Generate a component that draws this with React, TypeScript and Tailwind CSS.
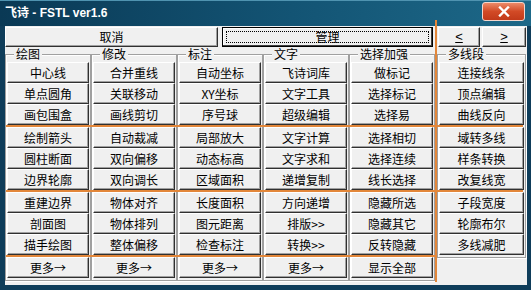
import React from "react";

type Col = { title: string; sections: string[][]; w: string };

const cols: Col[] = [
  { title: "绘图", w: "w-[86px]", sections: [["中心线", "单点圆角", "画包围盒"], ["绘制箭头", "圆柱断面", "边界轮廓"], ["重建边界", "剖面图", "描手绘图"], ["更多→"]] },
  { title: "修改", w: "w-[86px]", sections: [["合并重线", "关联移动", "画线剪切"], ["自动裁减", "双向偏移", "双向调长"], ["物体对齐", "物体排列", "整体偏移"], ["更多→"]] },
  { title: "标注", w: "w-[86px]", sections: [["自动坐标", "XY坐标", "序号球"], ["局部放大", "动态标高", "区域面积"], ["长度面积", "图元距离", "检查标注"], ["更多→"]] },
  { title: "文字", w: "w-[86px]", sections: [["飞诗词库", "文字工具", "超级编辑"], ["文字计算", "文字求和", "递增复制"], ["方向递增", "排版>>", "转换>>"], ["更多→"]] },
  { title: "选择加强", w: "w-[86px]", sections: [["做标记", "选择标记", "选择易"], ["选择相切", "选择连续", "线长选择"], ["隐藏所选", "隐藏其它", "反转隐藏"], ["显示全部"]] },
];

const last: Col = { title: "多线段", w: "w-[89px]", sections: [["连接线条", "顶点编辑", "曲线反向"], ["域转多线", "样条转换", "改复线宽"], ["子段宽度", "轮廓布尔", "多线减肥"]] };

function Btn({ label }: { label: string }) {
  return (
    <div className="h-[21px] flex items-center justify-center bg-[#f0f0f0] border border-t-white border-l-white border-b-[#303030] border-r-[#303030] shadow-[inset_-1px_-1px_0_#a0a0a0] text-[12px] leading-none text-black whitespace-nowrap">
      {label}
    </div>
  );
}

function Group({ col, ml }: { col: Col; ml?: string }) {
  return (
    <fieldset className={`${col.w} ${ml ?? ""} shrink-0 min-w-0 border border-[#a0a0a0] shadow-[inset_1px_1px_0_#ffffff,1px_1px_0_#ffffff] px-[1px] pt-[2px] pb-[2px]`}>
      <legend className="ml-[7px] px-[2px] text-[12px] leading-[12px] text-black bg-[#f0f0f0]">{col.title}</legend>
      <div className="flex flex-col gap-[2px]">
        {col.sections.map((sec, i) => (
          <div key={i} className="flex flex-col">
            {sec.map((b) => (
              <Btn key={b} label={b} />
            ))}
          </div>
        ))}
      </div>
    </fieldset>
  );
}

export default function App() {
  return (
    <div className="relative w-[531px] h-[290px] overflow-hidden font-['Noto_Sans_CJK_SC',sans-serif] text-black select-none">
      {/* title bar */}
      <div className="h-[26px] flex items-center justify-between bg-[linear-gradient(to_right,#0a3955,#135474_55%,#1d6888)] shadow-[inset_0_1px_0_#4f93b0]">
        <div className="pl-[5px] text-white font-bold text-[12px] font-['Liberation_Sans','Noto_Sans_CJK_SC',sans-serif] whitespace-pre">
          飞诗 - FSTL ver1.6
        </div>
        <div className="mr-[6px] mb-[3px] w-[43px] h-[19px] rounded-[3px] border border-[#f4d6cc] bg-[linear-gradient(to_bottom,#ec8a68,#d24a26_50%,#c23a1a)] flex items-center justify-center">
          <svg width="12" height="11" viewBox="0 0 12 11">
            <path d="M2 1.5 L10 9.5 M10 1.5 L2 9.5" stroke="white" strokeWidth="2.4" strokeLinecap="square" />
          </svg>
        </div>
      </div>

      {/* body */}
      <div className="h-[264px] bg-[#f0f0f0] border-l-[5px] border-r-[4px] border-b-[5px] border-[#0f3d5a] pt-[1px]">
        {/* top row */}
        <div className="flex h-[20px] text-[12px]">
          <div className="w-[213px] flex items-center justify-center bg-[#f0f0f0] border border-t-white border-l-white border-b-[#303030] border-r-[#303030] shadow-[inset_-1px_-1px_0_#a0a0a0]">
            取消
          </div>
          <div className="ml-[4px] w-[211px] p-[3px] bg-[#f0f0f0] border border-black shadow-[inset_-1px_-1px_0_#404040,inset_1px_1px_0_#ffffff]">
            <div className="h-full flex items-center justify-center border border-dotted border-black">管理</div>
          </div>
          <div className="ml-[5px] w-[42px] flex items-center justify-center bg-[#f0f0f0] border border-t-white border-l-white border-b-[#303030] border-r-[#303030] shadow-[inset_-1px_-1px_0_#a0a0a0] font-['Liberation_Sans',sans-serif] text-[13px] underline">
            &lt;
          </div>
          <div className="ml-[2px] w-[44px] flex items-center justify-center bg-[#f0f0f0] border border-t-white border-l-white border-b-[#303030] border-r-[#303030] shadow-[inset_-1px_-1px_0_#a0a0a0] font-['Liberation_Sans',sans-serif] text-[13px] underline">
            &gt;
          </div>
        </div>

        {/* groups */}
        <div className="mt-[1px] flex items-start">
          {cols.map((c) => (
            <Group key={c.title} col={c} />
          ))}
          <Group col={last} ml="ml-[2px]" />
        </div>
      </div>

      {/* orange guide lines */}
      <div className="absolute left-[435px] top-[20px] w-[2px] h-[262px] bg-[#e3873a]" />
      <div className="absolute left-[6px] top-[125px] w-[517px] h-[2px] bg-[#e3873a]" />
      <div className="absolute left-[6px] top-[190px] w-[517px] h-[2px] bg-[#e3873a]" />
      <div className="absolute left-[6px] top-[255px] w-[430px] h-[2px] bg-[#e3873a]" />
    </div>
  );
}
